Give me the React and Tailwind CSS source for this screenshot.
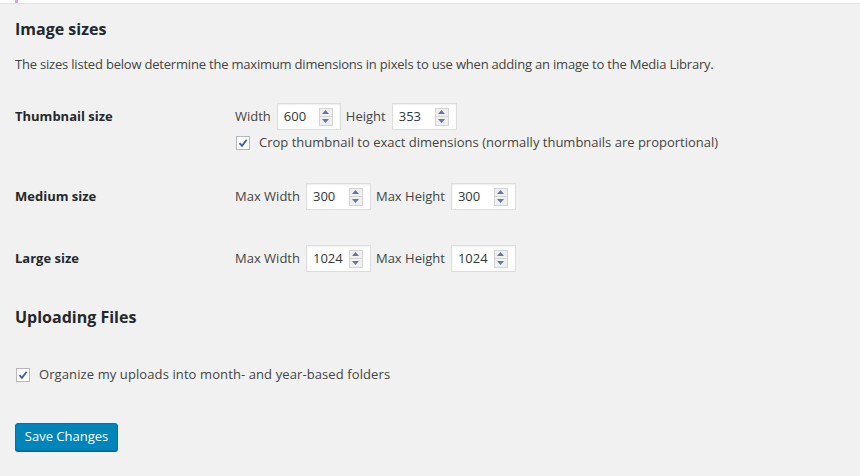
import React from "react"

const font = { fontFamily: "'Open Sans', 'Noto Sans', sans-serif" }

function Spinner() {
  return (
    <div className="flex flex-col w-[14px] h-[18px] border border-[#d5d5d5] bg-[#f0f0f0]">
      <div className="flex-1 flex items-center justify-center border-b border-[#d5d5d5]">
        <svg width="7" height="4" viewBox="0 0 7 4"><path d="M0 4 L3.5 0 L7 4 Z" fill="#5f78a8" /></svg>
      </div>
      <div className="flex-1 flex items-center justify-center">
        <svg width="7" height="4" viewBox="0 0 7 4"><path d="M0 0 L3.5 4 L7 0 Z" fill="#5f78a8" /></svg>
      </div>
    </div>
  )
}

function NumberInput({ value, width }) {
  return (
    <div className={`flex items-center justify-between h-[27px] ${width} bg-white border border-[#ddd] shadow-[inset_0_1px_2px_rgba(0,0,0,0.07)] pl-[6px] pr-[7px]`}>
      <span className="text-[13px] text-[#32373c]">{value}</span>
      <Spinner />
    </div>
  )
}

function Checkbox() {
  return (
    <div className="w-[14px] h-[14px] bg-white border border-[#b4b9be] flex items-center justify-center shrink-0">
      <svg width="10" height="10" viewBox="0 0 10 10">
        <path d="M1.5 5.2 L4 7.8 L8.6 1.8" fill="none" stroke="#3b5cb5" strokeWidth="1.8" />
      </svg>
    </div>
  )
}

function Field({ label, value, width }) {
  return (
    <div className="flex items-center gap-[6px]">
      <span className="text-[13px] text-[#444]">{label}</span>
      <NumberInput value={value} width={width} />
    </div>
  )
}

function SizeRow({ title, children }) {
  return (
    <div className="flex">
      <div className="w-[220px] h-[27px] flex items-center text-[13px] font-bold text-[#23282d]">{title}</div>
      <div className="flex flex-col">{children}</div>
    </div>
  )
}

export default function App() {
  return (
    <div className="w-[860px] h-[476px] bg-[#f1f1f1] overflow-hidden" style={font}>
      <div className="h-[3px] bg-white shadow-[0_1px_1px_rgba(0,0,0,0.06)] flex">
        <div className="ml-[15px] w-[3px] bg-[#d9a7d6]" />
      </div>

      <div className="px-[15px]">
        <h2 className="mt-[14px] text-[16px] leading-[24px] font-bold text-[#23282d]">Image sizes</h2>
        <p className="mt-[14px] text-[13px] leading-[18px] tracking-[-0.2px] text-[#444]">
          The sizes listed below determine the maximum dimensions in pixels to use when adding an image to the Media Library.
        </p>

        <div className="mt-[30px]">
          <SizeRow title="Thumbnail size">
            <div className="flex items-center gap-[5px]">
              <Field label="Width" value="600" width="w-[64px]" />
              <Field label="Height" value="353" width="w-[65px]" />
            </div>
            <label className="mt-[4px] flex items-center gap-[9px] h-[18px] pl-px">
              <Checkbox />
              <span className="text-[13px] text-[#444]">Crop thumbnail to exact dimensions (normally thumbnails are proportional)</span>
            </label>
          </SizeRow>
        </div>

        <div className="mt-[31px]">
          <SizeRow title="Medium size">
            <div className="flex items-center gap-[5px]">
              <Field label="Max Width" value="300" width="w-[65px]" />
              <Field label="Max Height" value="300" width="w-[65px]" />
            </div>
          </SizeRow>
        </div>

        <div className="mt-[35px]">
          <SizeRow title="Large size">
            <div className="flex items-center gap-[5px]">
              <Field label="Max Width" value="1024" width="w-[65px]" />
              <Field label="Max Height" value="1024" width="w-[65px]" />
            </div>
          </SizeRow>
        </div>

        <h2 className="mt-[33px] text-[16px] leading-[24px] font-bold text-[#23282d]">Uploading Files</h2>

        <label className="mt-[37px] flex items-center gap-[9px] h-[18px] pl-px">
          <Checkbox />
          <span className="text-[13px] tracking-[0.1px] text-[#444]">Organize my uploads into month- and year-based folders</span>
        </label>

        <button className="mt-[39px] h-[28px] w-[103px] rounded-[3px] bg-[#0085ba] border border-[#0073aa] shadow-[0_1px_0_#006799] text-[13px] text-white">
          Save Changes
        </button>
      </div>
    </div>
  )
}
